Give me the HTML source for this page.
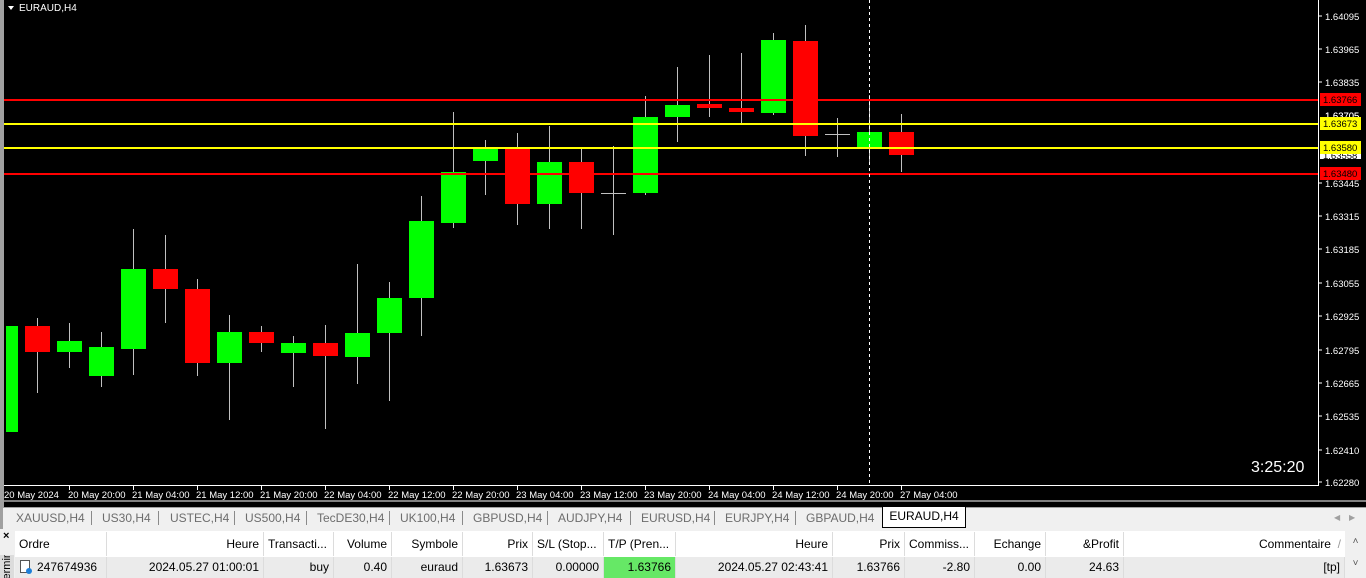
<!DOCTYPE html>
<html><head><meta charset="utf-8"><style>
body{margin:0;width:1366px;height:578px;overflow:hidden;background:#f0f0f0;font-family:"Liberation Sans",sans-serif;position:relative}
.a{position:absolute}
svg text{font-family:"Liberation Sans",sans-serif}
.tabs{top:507px;left:0;width:1366px;height:21px;background:#f0f0f0;border-top:1px solid #a0a0a0;font-size:12px;color:#6d6d6d}
.tab{position:absolute;top:3px}
.sep{position:absolute;top:3px;width:1px;height:14px;background:#8a8a8a}
.tbl{top:531px;left:15px;width:1351px;height:47px;background:#fff;font-size:12px;color:#000}
.c{position:absolute;height:24px;line-height:24px;box-sizing:border-box;border-right:1px solid #dcdcdc;padding:0 4px;white-space:nowrap;overflow:hidden}
.h .c{top:1px}
.r .c{top:26px;height:21px;line-height:21px;background:#ebebeb}
</style></head><body>
<svg class="a" style="left:0;top:0" width="1366" height="507">
<rect x="0" y="0" width="1366" height="507" fill="#000"/>
<rect x="0" y="0" width="4" height="507" fill="#a0a0a0"/>
<line x1="1318.5" y1="0" x2="1318.5" y2="486" stroke="#fff"/>
<line x1="4" y1="485.5" x2="1318" y2="485.5" stroke="#fff"/>
<line x1="4" y1="501" x2="1366" y2="501" stroke="#fff" stroke-width="1"/>
<g fill="#fff" font-size="9.5">
<text x="1325" y="20">1.64095</text><text x="1325" y="53">1.63965</text><text x="1325" y="86">1.63835</text><text x="1325" y="119">1.63705</text><text x="1325" y="187">1.63445</text><text x="1325" y="220">1.63315</text><text x="1325" y="253">1.63185</text><text x="1325" y="287">1.63055</text><text x="1325" y="320">1.62925</text><text x="1325" y="354">1.62795</text><text x="1325" y="387">1.62665</text><text x="1325" y="420">1.62535</text><text x="1325" y="454">1.62410</text><text x="1325" y="486">1.62280</text>
</g>
<g stroke="#fff"><line x1="1318" y1="16" x2="1322" y2="16"/><line x1="1318" y1="49" x2="1322" y2="49"/><line x1="1318" y1="82" x2="1322" y2="82"/><line x1="1318" y1="183" x2="1322" y2="183"/><line x1="1318" y1="216" x2="1322" y2="216"/><line x1="1318" y1="249" x2="1322" y2="249"/><line x1="1318" y1="283" x2="1322" y2="283"/><line x1="1318" y1="316" x2="1322" y2="316"/><line x1="1318" y1="350" x2="1322" y2="350"/><line x1="1318" y1="383" x2="1322" y2="383"/><line x1="1318" y1="416" x2="1322" y2="416"/><line x1="1318" y1="450" x2="1322" y2="450"/><line x1="1318" y1="482" x2="1322" y2="482"/></g>
<!-- candles -->
<g stroke="#c0c0c0" stroke-width="1">
<line x1="37.5" y1="318" x2="37.5" y2="393"/><line x1="69.5" y1="323" x2="69.5" y2="368"/><line x1="101.5" y1="332" x2="101.5" y2="387"/><line x1="133.5" y1="229" x2="133.5" y2="375"/><line x1="165.5" y1="235" x2="165.5" y2="323"/><line x1="197.5" y1="279" x2="197.5" y2="376"/><line x1="229.5" y1="315" x2="229.5" y2="420"/><line x1="261.5" y1="326" x2="261.5" y2="352"/><line x1="293.5" y1="336" x2="293.5" y2="387"/><line x1="325.5" y1="325" x2="325.5" y2="429"/><line x1="357.5" y1="264" x2="357.5" y2="384"/><line x1="389.5" y1="282" x2="389.5" y2="401"/><line x1="421.5" y1="196" x2="421.5" y2="336"/><line x1="453.5" y1="112" x2="453.5" y2="228"/><line x1="485.5" y1="140" x2="485.5" y2="195"/><line x1="517.5" y1="133" x2="517.5" y2="225"/><line x1="549.5" y1="126" x2="549.5" y2="229"/><line x1="581.5" y1="147" x2="581.5" y2="229"/><line x1="613.5" y1="146" x2="613.5" y2="235"/><line x1="645.5" y1="96" x2="645.5" y2="195"/><line x1="677.5" y1="67" x2="677.5" y2="142"/><line x1="709.5" y1="55" x2="709.5" y2="117"/><line x1="741.5" y1="53" x2="741.5" y2="123"/><line x1="773.5" y1="33" x2="773.5" y2="115"/><line x1="805.5" y1="25" x2="805.5" y2="156"/><line x1="837.5" y1="118" x2="837.5" y2="157"/><line x1="869.5" y1="95" x2="869.5" y2="165"/><line x1="901.5" y1="114" x2="901.5" y2="172"/>
<line x1="601" y1="193.5" x2="626" y2="193.5"/><line x1="825" y1="134.5" x2="850" y2="134.5"/>
</g>
<g fill="#00ff00">
<rect x="6" y="326" width="12" height="106"/><rect x="57" y="341" width="25" height="11"/><rect x="89" y="347" width="25" height="29"/><rect x="121" y="269" width="25" height="80"/><rect x="217" y="332" width="25" height="31"/><rect x="281" y="343" width="25" height="10"/><rect x="345" y="333" width="25" height="24"/><rect x="377" y="298" width="25" height="35"/><rect x="409" y="221" width="25" height="77"/><rect x="441" y="172" width="25" height="51"/><rect x="473" y="148" width="25" height="13"/><rect x="537" y="162" width="25" height="42"/><rect x="633" y="117" width="25" height="76"/><rect x="665" y="105" width="25" height="12"/><rect x="761" y="40" width="25" height="73"/><rect x="857" y="132" width="25" height="16"/>
</g>
<g fill="#ff0000">
<rect x="25" y="326" width="25" height="26"/><rect x="153" y="269" width="25" height="20"/><rect x="185" y="289" width="25" height="74"/><rect x="249" y="332" width="25" height="11"/><rect x="313" y="343" width="25" height="13"/><rect x="505" y="148" width="25" height="56"/><rect x="569" y="162" width="25" height="31"/><rect x="697" y="104" width="25" height="4"/><rect x="729" y="108" width="25" height="4"/><rect x="793" y="41" width="25" height="95"/><rect x="889" y="132" width="25" height="23"/>
</g>
<line x1="4" y1="100" x2="1318" y2="100" stroke="#ff0000" stroke-width="2"/>
<line x1="4" y1="124" x2="1318" y2="124" stroke="#ffff00" stroke-width="2"/>
<line x1="4" y1="148" x2="1318" y2="148" stroke="#ffff00" stroke-width="2"/>
<line x1="4" y1="174" x2="1318" y2="174" stroke="#ff0000" stroke-width="2"/>
<line x1="869.5" y1="0" x2="869.5" y2="486" stroke="#fff" stroke-dasharray="3,3"/>
<rect x="1320" y="93" width="41" height="13" fill="#ff0000"/><text x="1323" y="103" font-size="9.5" fill="#000">1.63766</text>
<text x="1325" y="119" font-size="9.5" fill="#fff">1.63705</text>
<rect x="1320" y="117" width="41" height="13" fill="#ffff00"/><text x="1323" y="127" font-size="9.5" fill="#000">1.63673</text>
<rect x="1320" y="152" width="41" height="7" fill="#fff"/><text x="1323" y="159" font-size="9.5" fill="#000">1.63558</text>
<rect x="1320" y="141" width="41" height="13" fill="#ffff00"/><text x="1323" y="151" font-size="9.5" fill="#000">1.63580</text>
<rect x="1320" y="167" width="41" height="13" fill="#ff0000"/><text x="1323" y="177" font-size="9.5" fill="#000">1.63480</text>
<polygon points="8,6 14,6 11,10" fill="#fff"/>
<text x="19" y="11" font-size="10" fill="#fff">EURAUD,H4</text>
<text x="1251" y="472" font-size="16" fill="#fff">3:25:20</text>
<g fill="#fff" font-size="9.5"><text x="4" y="498">20 May 2024</text><text x="68" y="498">20 May 20:00</text><text x="132" y="498">21 May 04:00</text><text x="196" y="498">21 May 12:00</text><text x="260" y="498">21 May 20:00</text><text x="324" y="498">22 May 04:00</text><text x="388" y="498">22 May 12:00</text><text x="452" y="498">22 May 20:00</text><text x="516" y="498">23 May 04:00</text><text x="580" y="498">23 May 12:00</text><text x="644" y="498">23 May 20:00</text><text x="708" y="498">24 May 04:00</text><text x="772" y="498">24 May 12:00</text><text x="836" y="498">24 May 20:00</text><text x="900" y="498">27 May 04:00</text></g>
<g stroke="#fff"><line x1="69.5" y1="486" x2="69.5" y2="490"/><line x1="133.5" y1="486" x2="133.5" y2="490"/><line x1="197.5" y1="486" x2="197.5" y2="490"/><line x1="261.5" y1="486" x2="261.5" y2="490"/><line x1="325.5" y1="486" x2="325.5" y2="490"/><line x1="389.5" y1="486" x2="389.5" y2="490"/><line x1="453.5" y1="486" x2="453.5" y2="490"/><line x1="517.5" y1="486" x2="517.5" y2="490"/><line x1="581.5" y1="486" x2="581.5" y2="490"/><line x1="645.5" y1="486" x2="645.5" y2="490"/><line x1="709.5" y1="486" x2="709.5" y2="490"/><line x1="773.5" y1="486" x2="773.5" y2="490"/><line x1="837.5" y1="486" x2="837.5" y2="490"/><line x1="901.5" y1="486" x2="901.5" y2="490"/></g>
</svg>
<div class="a tabs">
<div class="a" style="left:0;top:0;width:3px;height:21px;background:#a0a0a0"></div>
<span class="tab" style="left:16px">XAUUSD,H4</span><div class="sep" style="left:91px"></div>
<span class="tab" style="left:102px">US30,H4</span><div class="sep" style="left:158px"></div>
<span class="tab" style="left:170px">USTEC,H4</span><div class="sep" style="left:234px"></div>
<span class="tab" style="left:245px">US500,H4</span><div class="sep" style="left:306px"></div>
<span class="tab" style="left:317px">TecDE30,H4</span><div class="sep" style="left:389px"></div>
<span class="tab" style="left:400px">UK100,H4</span><div class="sep" style="left:462px"></div>
<span class="tab" style="left:473px">GBPUSD,H4</span><div class="sep" style="left:547px"></div>
<span class="tab" style="left:558px">AUDJPY,H4</span><div class="sep" style="left:630px"></div>
<span class="tab" style="left:641px">EURUSD,H4</span><div class="sep" style="left:714px"></div>
<span class="tab" style="left:725px">EURJPY,H4</span><div class="sep" style="left:795px"></div>
<span class="tab" style="left:806px">GBPAUD,H4</span>
<div class="a" style="left:882px;top:-1px;width:82px;height:20px;background:#fff;border:1px solid #000;border-top:none;color:#000;font-size:12px;line-height:19px;text-align:center">EURAUD,H4</div>
<span class="tab" style="left:1334px;font-size:8px;top:5px;color:#a0a0a0">◀&nbsp;&nbsp;&nbsp;&nbsp;▶</span>
</div>
<div class="a" style="left:0;top:529px;width:15px;height:49px;background:#f0f0f0">
<div class="a" style="left:3px;top:1px;font-size:11px;font-weight:bold">×</div>
<div class="a" style="left:0;top:26px;width:14px;height:23px;background:#dcdcdc;overflow:hidden"><div style="transform:rotate(-90deg);transform-origin:0 0;position:absolute;left:1px;top:30px;font-size:11px">Terminal</div></div>
</div>
<div class="a tbl">
<div class="h">
<div class="c" style="left:0;width:92px">Ordre</div>
<div class="c" style="left:92px;width:157px;text-align:right">Heure</div>
<div class="c" style="left:249px;width:70px">Transacti...</div>
<div class="c" style="left:319px;width:58px;text-align:right">Volume</div>
<div class="c" style="left:377px;width:71px;text-align:right">Symbole</div>
<div class="c" style="left:448px;width:70px;text-align:right">Prix</div>
<div class="c" style="left:518px;width:71px">S/L (Stop...</div>
<div class="c" style="left:589px;width:72px">T/P (Pren...</div>
<div class="c" style="left:661px;width:157px;text-align:right">Heure</div>
<div class="c" style="left:818px;width:72px;text-align:right">Prix</div>
<div class="c" style="left:890px;width:70px">Commiss...</div>
<div class="c" style="left:960px;width:71px;text-align:right">Echange</div>
<div class="c" style="left:1031px;width:78px;text-align:right">&amp;Profit</div>
<div class="c" style="left:1109px;width:221px;text-align:right;border:none">Commentaire &nbsp;<span style="color:#999">/</span></div>
</div>
<div class="r">
<div class="c" style="left:0;width:92px;padding-left:22px">247674936</div>
<div class="a" style="left:5px;top:29px;width:10px;height:13px;border:1px solid #555;background:#fff;box-sizing:border-box"></div>
<div class="a" style="left:11px;top:37px;width:6px;height:6px;border-radius:50%;background:#1e7fd8"></div>
<div class="c" style="left:92px;width:157px;text-align:right">2024.05.27 01:00:01</div>
<div class="c" style="left:249px;width:70px;text-align:right">buy</div>
<div class="c" style="left:319px;width:58px;text-align:right">0.40</div>
<div class="c" style="left:377px;width:71px;text-align:right">euraud</div>
<div class="c" style="left:448px;width:70px;text-align:right">1.63673</div>
<div class="c" style="left:518px;width:71px;text-align:right">0.00000</div>
<div class="c" style="left:589px;width:72px;text-align:right;background:#66e866">1.63766</div>
<div class="c" style="left:661px;width:157px;text-align:right">2024.05.27 02:43:41</div>
<div class="c" style="left:818px;width:72px;text-align:right">1.63766</div>
<div class="c" style="left:890px;width:70px;text-align:right">-2.80</div>
<div class="c" style="left:960px;width:71px;text-align:right">0.00</div>
<div class="c" style="left:1031px;width:78px;text-align:right">24.63</div>
<div class="c" style="left:1109px;width:221px;text-align:right">[tp]</div>
</div>
<div class="a" style="left:1330px;top:0;width:21px;height:47px;background:#f0f0f0;font-size:10px;color:#555;text-align:center;line-height:22px">˄<br>˅</div>
</div>
</body></html>
